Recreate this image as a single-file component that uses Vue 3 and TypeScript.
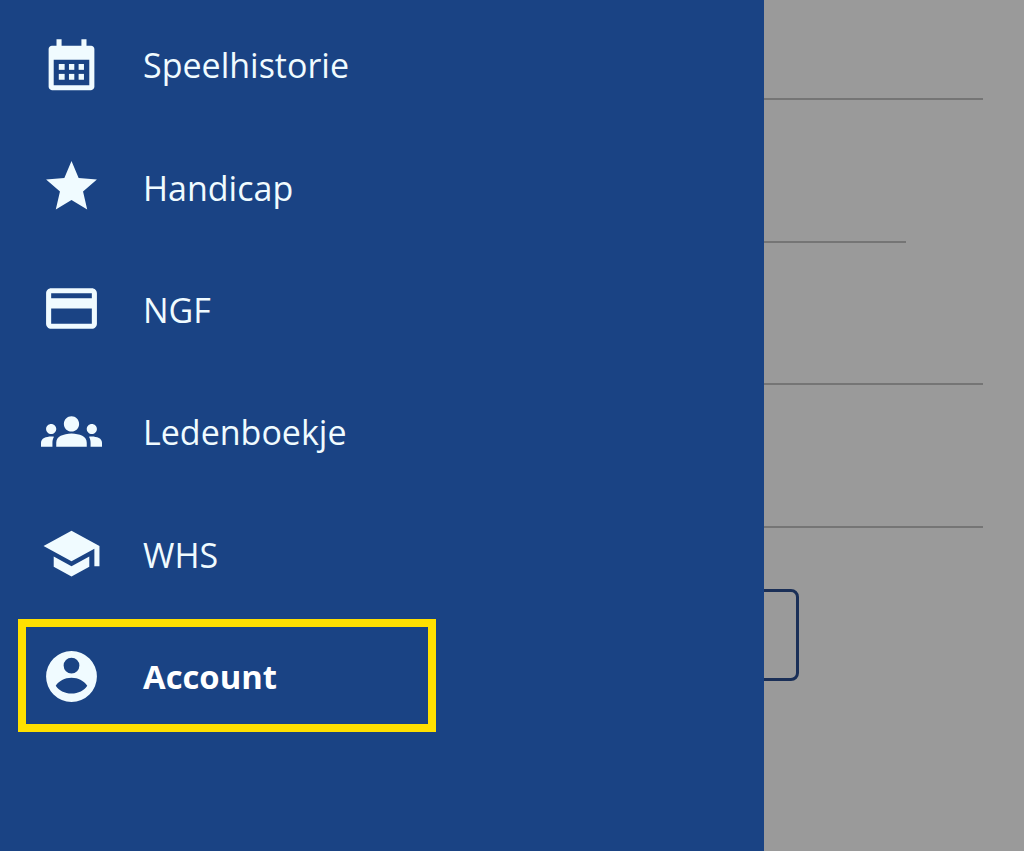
<script setup lang="ts">
interface MenuItem {
  label: string;
  icon: string;
  active?: boolean;
}

const items: MenuItem[] = [
  { label: "Speelhistorie", icon: "calendar" },
  {
    label: "Handicap",
    icon: "M12 17.27L18.18 21l-1.64-7.03L22 9.24l-7.19-.61L12 2 9.19 8.63 2 9.24l5.46 4.73L5.82 21z",
  },
  {
    label: "NGF",
    icon: "M20 4H4c-1.11 0-1.99.89-1.99 2L2 18c0 1.11.89 2 2 2h16c1.11 0 2-.89 2-2V6c0-1.11-.89-2-2-2zm0 14H4v-6h16v6zm0-10H4V6h16v2z",
  },
  {
    label: "Ledenboekje",
    icon: "M4 13c1.1 0 2-.9 2-2s-.9-2-2-2-2 .9-2 2 .9 2 2 2zm1.13 1.1C4.76 14.04 4.39 14 4 14c-.99 0-1.93.21-2.78.58C.48 14.9 0 15.62 0 16.43V18h4.5v-1.61c0-.83.23-1.61.63-2.29zM20 13c1.1 0 2-.9 2-2s-.9-2-2-2-2 .9-2 2 .9 2 2 2zm4 3.43c0-.81-.48-1.53-1.22-1.85C21.93 14.21 20.99 14 20 14c-.39 0-.76.04-1.13.1.4.68.63 1.46.63 2.29V18H24v-1.57zm-7.76-2.78c-1.17-.52-2.61-.9-4.24-.9s-3.07.39-4.24.9C6.68 14.13 6 15.21 6 16.39V18h12v-1.61c0-1.18-.68-2.26-1.76-2.74zM12 12c1.66 0 3-1.34 3-3s-1.34-3-3-3-3 1.34-3 3 1.34 3 3 3z",
  },
  {
    label: "WHS",
    icon: "M5 13.18v4L12 21l7-3.82v-4L12 17l-7-3.82zM12 3L1 9l11 6 9-4.91V17h2V9L12 3z",
  },
  {
    label: "Account",
    icon: "M12 2a10 10 0 1 0 0 20 10 10 0 0 0 0-20zm0 2.6a3.1 3.1 0 1 1 0 6.2 3.1 3.1 0 0 1 0-6.2zm0 7.9c2.7 0 5 1.3 6.2 3.1-1.2 1.8-3.5 3.1-6.2 3.1s-5-1.3-6.2-3.1c1.2-1.8 3.5-3.1 6.2-3.1z",
    active: true,
  },
];

const lineWidths = [943, 866, 943, 943];
</script>

<template>
  <div class="screen">
    <!-- greyed out page behind the drawer -->
    <main class="page">
      <div
        v-for="(width, i) in lineWidths"
        :key="i"
        class="line"
        :style="{ width: width + 'px' }"
      />
      <div class="button" />
    </main>

    <nav class="drawer">
      <a
        v-for="item in items"
        :key="item.label"
        class="row"
        :class="{ active: item.active }"
      >
        <svg class="icon" viewBox="0 0 24 24" aria-hidden="true">
          <template v-if="item.icon === 'calendar'">
            <path
              fill-rule="evenodd"
              d="M6.1 4.600H4.300c-.7 0-1.300.6-1.300 1.300v14.900c0 .7.6 1.300 1.300 1.300h15.400c.7 0 1.300-.6 1.300-1.300V5.900c0-.7-.6-1.300-1.300-1.300h-1.800V2.100h-2v2.500H8.100V2.100h-2zM5 10.100v10.100h14V10.100z"
            />
            <rect x="7" y="11.800" width="2.300" height="2.300" />
            <rect x="11" y="11.800" width="2.100" height="2.300" />
            <rect x="14.800" y="11.800" width="2.100" height="2.300" />
            <rect x="7" y="15.700" width="2.300" height="2.300" />
            <rect x="11" y="15.700" width="2.100" height="2.300" />
            <rect x="14.800" y="15.700" width="2.100" height="2.300" />
          </template>
          <path v-else fill-rule="evenodd" :d="item.icon" />
        </svg>
        <span class="label">{{ item.label }}</span>
        <span v-if="item.active" class="highlight" />
      </a>
    </nav>
  </div>
</template>

<style scoped>
.screen {
  position: relative;
  width: 1024px;
  height: 851px;
  overflow: hidden;
  background: #9a9a9a;
}

.page {
  box-sizing: border-box;
  height: 100%;
  padding: 98px 0 0 40px;
  display: flex;
  flex-direction: column;
  gap: 140.6px;
}

.line {
  height: 2px;
  background: #757575;
}

.button {
  box-sizing: border-box;
  width: 759px;
  height: 92px;
  margin-top: -79.4px;
  border: 3px solid #1a2f57;
  border-radius: 8px;
}

.drawer {
  position: absolute;
  top: 0;
  left: 0;
  bottom: 0;
  width: 764px;
  box-sizing: border-box;
  padding-top: 3px;
  background: #1a4384;
}

.row {
  position: relative;
  height: 122.4px;
  padding-left: 40.5px;
  display: flex;
  align-items: center;
  gap: 41.5px;
  color: #f0fbff;
}

.icon {
  width: 61px;
  height: 61px;
  flex: none;
  fill: #f0fbff;
}

.label {
  padding-top: 2px;
  font-family: "Open Sans", "Lato", sans-serif;
  font-size: 34px;
  line-height: 1;
}

.active .label {
  font-size: 32.8px;
  font-weight: 700;
  color: #fff;
}

.highlight {
  position: absolute;
  left: 18px;
  top: 4px;
  width: 418px;
  height: 113px;
  box-sizing: border-box;
  border: 8px solid #ffe000;
  pointer-events: none;
}
</style>

<style>
html,
body {
  margin: 0;
  background: #9a9a9a;
}
</style>
